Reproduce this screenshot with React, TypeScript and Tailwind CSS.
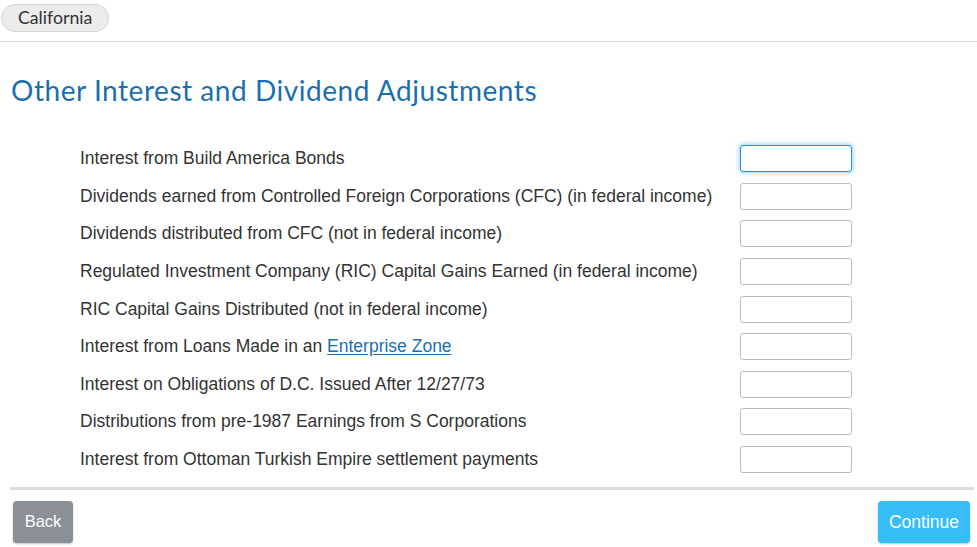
import React from "react";

const rows: React.ReactNode[] = [
  "Interest from Build America Bonds",
  "Dividends earned from Controlled Foreign Corporations (CFC) (in federal income)",
  "Dividends distributed from CFC (not in federal income)",
  "Regulated Investment Company (RIC) Capital Gains Earned (in federal income)",
  "RIC Capital Gains Distributed (not in federal income)",
  <>
    Interest from Loans Made in an{" "}
    <a href="#" className="text-[#1a6fb0] underline underline-offset-2">
      Enterprise Zone
    </a>
  </>,
  "Interest on Obligations of D.C. Issued After 12/27/73",
  "Distributions from pre-1987 Earnings from S Corporations",
  "Interest from Ottoman Turkish Empire settlement payments",
];

export default function App() {
  return (
    <div className="w-[977px] h-[547px] bg-white overflow-hidden relative">
      <div className="h-[42px] border-b border-[#d6d6d6] pt-[4px] pl-[1px]">
        <span
          className="inline-flex items-center h-[28px] px-[16px] rounded-full bg-[#ececec] border border-[#d4d4d4] text-[17.7px] text-[#333]"
          style={{ fontFamily: "Lato, 'Noto Sans', sans-serif" }}
        >
          California
        </span>
      </div>
      <h1
        className="mt-[31px] ml-[11px] text-[28px] leading-[34px] tracking-[0.55px] text-[#1a6fb0]"
        style={{ fontFamily: "Lato, 'Noto Sans', sans-serif" }}
      >
        Other Interest and Dividend Adjustments
      </h1>
      <div
        className="mt-[38px] flex flex-col"
        style={{ fontFamily: "'Liberation Sans', Arial, sans-serif" }}
      >
        {rows.map((r, i) => (
          <div key={i} className="h-[37.625px] flex items-start">
            <div className="ml-[80px] w-[660px] text-[17.5px] leading-[27px] text-[#333]">{r}</div>
            <input
              className={
                "w-[112px] h-[27px] rounded-[3px] bg-white outline-none " +
                (i === 0
                  ? "border border-[#2a8fcf] shadow-[0_0_4px_1px_rgba(70,180,240,0.55)]"
                  : "border border-[#bdbdbd]")
              }
            />
          </div>
        ))}
      </div>
      <div className="mx-[10px] mt-[3px] h-[3px] bg-[#dcdcdc] w-[964px]" />
      <div
        className="flex justify-between mt-[11px] pl-[13px] pr-[7px]"
        style={{ fontFamily: "'Liberation Sans', Arial, sans-serif" }}
      >
        <button className="w-[60px] h-[42px] rounded-[4px] bg-[#8b9096] text-white text-[16.5px] shadow-[0_1px_2px_rgba(0,0,0,0.25)]">
          Back
        </button>
        <button className="w-[92px] h-[42px] rounded-[4px] bg-[#36bdf6] text-white text-[17.5px] shadow-[0_1px_2px_rgba(0,0,0,0.25)]">
          Continue
        </button>
      </div>
    </div>
  );
}
